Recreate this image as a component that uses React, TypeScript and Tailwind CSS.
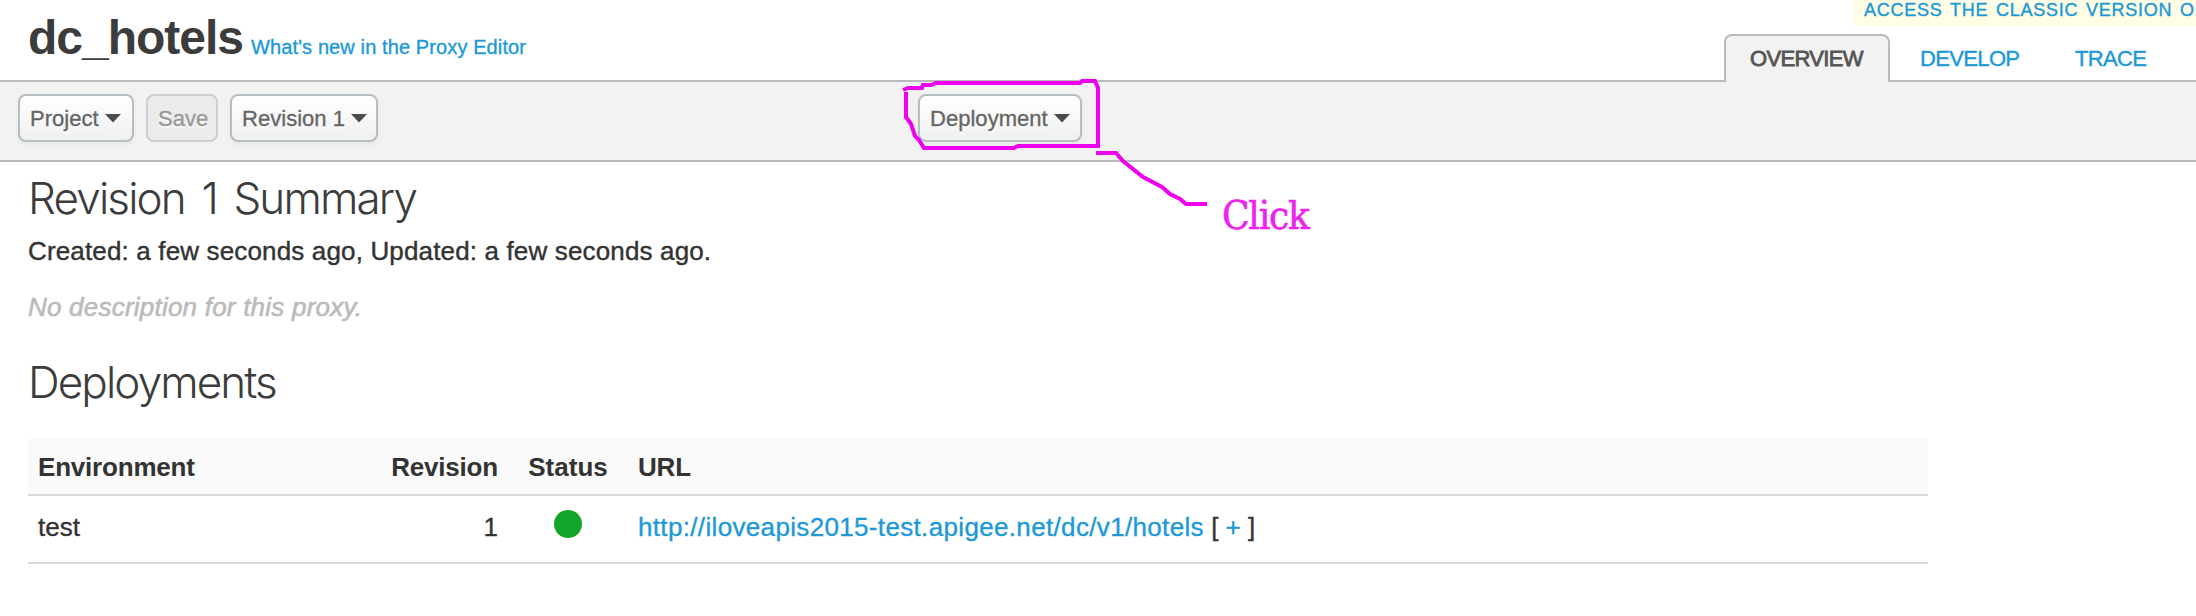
import type { ReactNode } from 'react';

function Caret() {
  return (
    <svg width="16" height="9" viewBox="0 0 16 9" className="shrink-0" aria-hidden="true">
      <path d="M0 0H16L8 8.5Z" fill="#4c4c4c" />
    </svg>
  );
}

function ToolButton({ children, width, disabled = false }: { children: ReactNode; width: string; disabled?: boolean }) {
  const look = disabled
    ? 'border-[#c9cfd2] bg-[#ebebeb] text-[#999]'
    : 'border-[#b3bfc3] bg-linear-to-b from-white to-[#f0f0f0] text-[#666] shadow-[0_2px_4px_rgba(0,0,0,0.05)]';
  return (
    <button
      className={`flex h-12 items-center gap-[6px] rounded-[8px] border-2 pt-px pl-[10px] text-[22px] leading-none tracking-[0.03px] [-webkit-text-stroke:0.35px_currentColor] [text-shadow:0_2px_2px_#fff] ${look} ${width}`}
    >
      {children}
    </button>
  );
}

export default function App() {
  return (
    <div className="relative h-[616px] w-[2196px] overflow-hidden bg-white font-['Liberation_Sans',Arial,sans-serif] text-[#333]">
      <header className="flex h-20 justify-between">
        <div className="flex items-baseline gap-[8px] pl-7 pt-[10px]">
          <h1 className="text-[48px] leading-[56px] font-bold tracking-[-1px] text-[#3c3c3c]">dc_hotels</h1>
          <a className="text-[20px] tracking-[0.11px] text-[#1c99d6] [-webkit-text-stroke:0.35px_#1c99d6]">
            What's new in the Proxy Editor
          </a>
        </div>
        <div className="flex w-[472px] flex-col">
          <div className="ml-[130px] h-[26px] shrink-0 overflow-hidden bg-[#fffde6] pl-[10px] text-[18px] leading-[20px] tracking-[0.75px] whitespace-nowrap text-[#1c99d6] [-webkit-text-stroke:0.4px_#1c99d6] [word-spacing:2px]">
            ACCESS THE CLASSIC VERSION OF
          </div>
          <nav className="mt-2 flex h-12 shrink-0 text-[22px] leading-[49px] tracking-[-0.65px] text-[#1c99d6] [-webkit-text-stroke:0.4px_#1c99d6]">
            <div className="z-10 h-12 w-[166px] rounded-t-[8px] border-2 border-b-0 border-[#bababa] bg-[#f2f2f2] pl-[24px] leading-[45px] text-[#555] [-webkit-text-stroke:0.8px_#555]">
              OVERVIEW
            </div>
            <a className="ml-[30px] w-[155px]">DEVELOP</a>
            <a>TRACE</a>
          </nav>
        </div>
      </header>

      <div className="flex h-[82px] items-start border-y-2 border-[#bababa] bg-[#f2f2f2] pt-3 pl-[18px]">
        <ToolButton width="w-[116px] mr-3">Project<Caret /></ToolButton>
        <ToolButton width="w-[72px] mr-3" disabled>Save</ToolButton>
        <ToolButton width="w-[148px] mr-[540px]">Revision 1<Caret /></ToolButton>
        <ToolButton width="w-[164px]">Deployment<Caret /></ToolButton>
      </div>

      <main className="pl-7">
        <h2 className="h-[71px] pt-[10px] font-[Inter] text-[44px] leading-[52px] font-light tracking-[-1.85px] text-[#3c3c3c] [word-spacing:6px]">
          Revision 1 Summary
        </h2>
        <p className="h-14 text-[26px] leading-[36px] tracking-[0.15px] [-webkit-text-stroke:0.4px_#333]">
          Created: a few seconds ago, Updated: a few seconds ago.
        </p>
        <p className="h-14 text-[26px] leading-[36px] tracking-[0.22px] text-[#bbb] italic [-webkit-text-stroke:0.6px_#bbb]">
          No description for this proxy.
        </p>
        <h2 className="h-[93px] pt-[11px] font-[Inter] text-[44px] leading-[52px] font-light tracking-[-1.9px] text-[#3c3c3c]">
          Deployments
        </h2>
        <table className="w-[1900px] table-fixed border-separate border-spacing-0 text-[26px] leading-[30px]">
          <colgroup>
            <col className="w-[350px]" />
            <col className="w-[130px]" />
            <col className="w-[120px]" />
            <col />
          </colgroup>
          <thead>
            <tr className="h-[58px] bg-[#fafafa] text-left tracking-[-0.2px] *:border-b-2 *:border-[#d9d9d9] *:pt-[2px]">
              <th className="pl-[10px]">Environment</th>
              <th className="pr-[10px] text-right">Revision</th>
              <th className="text-center tracking-normal">Status</th>
              <th className="pl-[10px]">URL</th>
            </tr>
          </thead>
          <tbody>
            <tr className="h-[68px] [-webkit-text-stroke:0.35px_currentColor] *:border-b-2 *:border-[#d9d9d9] *:align-top">
              <td className="pt-4 pl-[10px]">test</td>
              <td className="pt-4 pr-[10px] text-right">1</td>
              <td className="pt-[14px]">
                <div className="mx-auto h-7 w-7 rounded-full bg-[#13a52b]" />
              </td>
              <td className="pt-4 pl-[10px]">
                <a className="tracking-[0.34px] text-[#1c99d6] [-webkit-text-stroke:0.35px_#1c99d6]">
                  http://iloveapis2015-test.apigee.net/dc/v1/hotels
                </a>{' '}
                [ <a className="text-[#1c99d6] [-webkit-text-stroke:0.35px_#1c99d6]">+</a> ]
              </td>
            </tr>
          </tbody>
        </table>
      </main>

      <svg className="absolute top-[70px] left-[890px]" width="330" height="145" viewBox="890 70 330 145" fill="none" stroke="#ee00ee" strokeWidth="4">
        <path d="M903 90L908 88H922L923 85H931L936 83H1080L1082 81H1095L1098 88V146H1018L1014 148H924L919 140L915 136L911 124L906 117V92" />
        <path d="M1096 153H1116L1123 161L1143 177L1162 187L1170 194L1180 199L1186 204H1207" />
      </svg>
      <div className="absolute top-[190px] left-[1222px] font-['DejaVu_Serif_Condensed','DejaVu_Serif',serif] text-[40px] leading-[50px] tracking-[-1.2px] text-[#ee22ee] [-webkit-text-stroke:0.6px_#ee22ee]">
        Click
      </div>
    </div>
  );
}
